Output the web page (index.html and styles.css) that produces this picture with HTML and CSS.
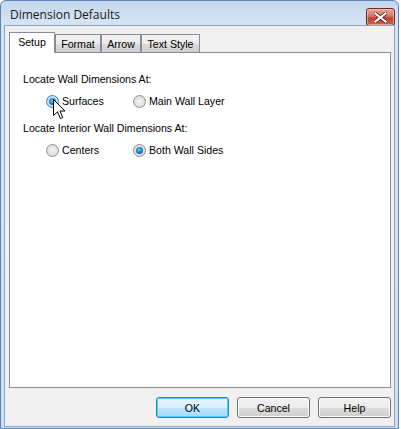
FILE: index.html
```html
<!DOCTYPE html>
<html>
<head>
<meta charset="utf-8">
<link rel="stylesheet" href="styles.css">
</head>
<body>
<div class="window">
  <div class="titlebar">
    <span class="title">Dimension Defaults</span>
    <button class="close" aria-label="Close">
      <svg width="13" height="11" viewBox="0 0 13 11"><path d="M1.5 1.5 L11.5 9.5 M11.5 1.5 L1.5 9.5" stroke="#4a1a14" stroke-width="3.6" stroke-linecap="square"/><path d="M1.5 1.5 L11.5 9.5 M11.5 1.5 L1.5 9.5" stroke="#ffffff" stroke-width="2.2" stroke-linecap="square"/></svg>
    </button>
  </div>
  <div class="client">
    <div class="tabs">
      <div class="tab active w-setup">Setup</div>
      <div class="tab w-format">Format</div>
      <div class="tab w-arrow">Arrow</div>
      <div class="tab w-text">Text Style</div>
    </div>
    <div class="panel">
      <div class="heading">Locate Wall Dimensions At:</div>
      <div class="radio-row">
        <label class="radio"><span class="dot checked hover"></span>Surfaces</label>
        <label class="radio"><span class="dot"></span>Main Wall Layer</label>
      </div>
      <div class="heading second">Locate Interior Wall Dimensions At:</div>
      <div class="radio-row">
        <label class="radio"><span class="dot"></span>Centers</label>
        <label class="radio"><span class="dot checked"></span>Both Wall Sides</label>
      </div>
    </div>
    <div class="buttons">
      <button class="btn default">OK</button>
      <button class="btn">Cancel</button>
      <button class="btn">Help</button>
    </div>
  </div>
  <svg class="cursor" width="13" height="21" viewBox="0 0 13 21"><path d="M0.5 0.5 V16.5 L4.5 12.8 L7.3 19.5 L9.7 18.5 L7 12 H12 Z" fill="#ffffff" stroke="#000000" stroke-width="1" stroke-linejoin="miter"/></svg>
</div>
</body>
</html>
```
FILE: styles.css
```css
html, body {
  margin: 0;
  padding: 0;
  background: #ffffff;
}
body {
  font-family: "Liberation Sans", Arial, sans-serif;
  font-size: 10.6px;
  color: #000;
}
.window {
  position: relative;
  width: 399px;
  height: 429px;
  box-sizing: border-box;
  border: 1px solid #5b86b3;
  border-radius: 6px 6px 0 0;
  background: linear-gradient(#c3d7ed, #d5e4f4 22px, #cfdff1);
  padding: 0 3px 1px;
  display: flex;
  flex-direction: column;
}
.titlebar {
  height: 24px;
  display: flex;
  align-items: center;
  justify-content: space-between;
  padding-left: 6px;
}
.title {
  font-family: "Open Sans", "Liberation Sans", sans-serif;
  font-size: 12px;
  color: #1a1a1a;
  margin-top: 3px;
}
.close {
  width: 29px;
  height: 18px;
  margin-top: 8px;
  margin-right: 0;
  padding: 0;
  border: 1px solid #6d2a22;
  border-radius: 3px;
  background: linear-gradient(#e5a69b, #d7776a 45%, #c04632 55%, #c9624e);
  box-shadow: inset 0 0 0 1px rgba(255, 220, 210, 0.5);
  display: flex;
  align-items: center;
  justify-content: center;
}
.client {
  flex: 1;
  background: #f0f0f0;
  border: 1px solid #8aa6c6;
  display: flex;
  flex-direction: column;
  padding: 6px 0 0 4px;
}
.tabs {
  display: flex;
  align-items: flex-end;
  height: 20px;
  position: relative;
  z-index: 1;
}
.tab {
  height: 18px;
  box-sizing: border-box;
  border: 1px solid #898c95;
  border-bottom: none;
  background: linear-gradient(#f3f3f3, #ebebeb 50%, #dddddd 50%, #cfcfcf);
  padding-top: 2px;
  line-height: 14px;
  text-align: center;
}
.w-setup { width: 46px; }
.w-format { width: 46px; }
.w-arrow { width: 40px; }
.w-text { width: 59px; }
.tab.active {
  height: 21px;
  background: #ffffff;
  padding-top: 2px;
  margin-bottom: -1px;
  z-index: 2;
}
.panel {
  height: 336px;
  box-sizing: border-box;
  background: #ffffff;
  border: 1px solid #898c95;
  margin-right: 3px;
  padding: 19px 13px 0 13px;
}
.heading {
  line-height: 14px;
  height: 14px;
}
.heading.second { margin-top: 13px; }
.radio-row {
  display: grid;
  grid-template-columns: 87px auto;
  margin-top: 8px;
  padding-left: 23px;
  height: 14px;
  line-height: 14px;
}
.radio {
  display: flex;
  align-items: center;
  gap: 3px;
}
.dot {
  width: 13px;
  height: 13px;
  box-sizing: border-box;
  border-radius: 50%;
  border: 1px solid #8f8f8f;
  background: radial-gradient(circle at 50% 50%, #f4f4f4 0, #e3e3e3 55%, #d0d0d0 100%);
  position: relative;
  flex: none;
}
.dot.hover {
  border-color: #3c7fb1;
  background: radial-gradient(circle, #e3f3fc 0, #bfe3f8 60%, #a8d4f0 100%);
}
.dot.checked::after {
  content: "";
  position: absolute;
  left: 2px;
  top: 2px;
  width: 7px;
  height: 7px;
  border-radius: 50%;
  background: radial-gradient(circle at 45% 40%, #5fd0f7 0, #1e84c9 45%, #0b4a7e 100%);
}
.buttons {
  display: flex;
  justify-content: flex-end;
  gap: 8px;
  margin-top: 9px;
  padding-right: 3px;
}
.btn {
  width: 73px;
  height: 21px;
  box-sizing: border-box;
  border: 1px solid #707070;
  border-radius: 3px;
  background: linear-gradient(#f2f2f2, #ebebeb 50%, #dddddd 50%, #cfcfcf);
  box-shadow: inset 0 0 0 1px #fcfcfc;
  font-family: "Liberation Sans", Arial, sans-serif;
  font-size: 10.6px;
  color: #000;
  padding: 0;
}
.btn.default {
  border-color: #3c7fb1;
  box-shadow: inset 0 0 0 1px #48d0f8;
  background: linear-gradient(#eaf6fd, #d9f0fc 50%, #bee6fd 50%, #a7d9f5);
}
.cursor {
  position: absolute;
  left: 52px;
  top: 98px;
  z-index: 5;
}
```
